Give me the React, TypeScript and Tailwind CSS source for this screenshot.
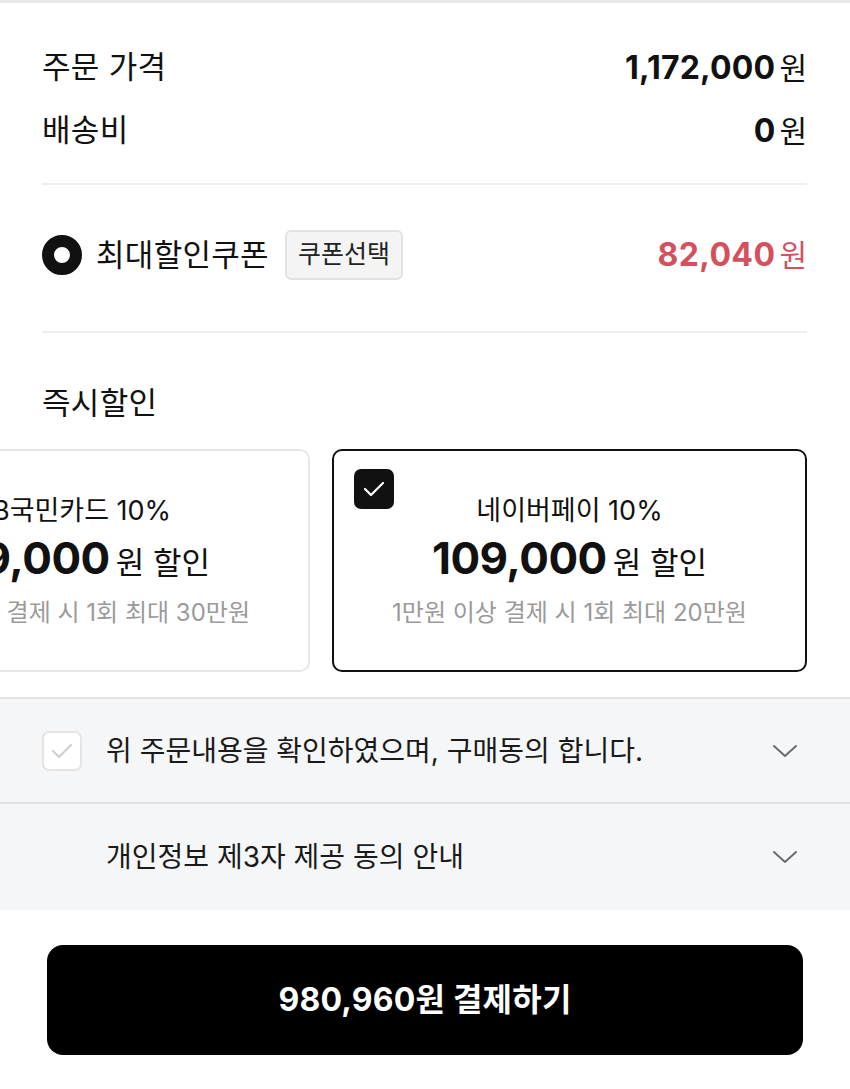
const Chevron = () => (
  <svg width="26" height="16" viewBox="0 0 26 16" fill="none">
    <polyline points="2,3 13,13 24,3" stroke="#6b6b6b" strokeWidth="2" strokeLinecap="round" strokeLinejoin="round" />
  </svg>
);

const Check = ({ color }: { color: string }) => (
  <svg width="24" height="18" viewBox="0 0 24 18" fill="none">
    <polyline points="3,9 9,15 21,3" stroke={color} strokeWidth="2.2" strokeLinecap="round" strokeLinejoin="round" />
  </svg>
);

type Card = { name: string; amount: string; note: string; selected: boolean };

const cards: Card[] = [
  { name: "KB국민카드 10%", amount: "109,000", note: "1만원 이상 결제 시 1회 최대 30만원", selected: false },
  { name: "네이버페이 10%", amount: "109,000", note: "1만원 이상 결제 시 1회 최대 20만원", selected: true },
];

const DiscountCard = ({ card }: { card: Card }) => (
  <div
    className={
      card.selected
        ? "relative w-[475px] h-[223px] shrink-0 rounded-[10px] border-2 border-[#111] bg-white flex flex-col items-center pt-[42px]"
        : "relative w-[475px] h-[223px] shrink-0 rounded-[10px] border-2 border-[#e6e6e6] bg-white flex flex-col items-center pt-[42px]"
    }
  >
    {card.selected && (
      <div className="absolute left-[20px] top-[18px] w-[40px] h-[40px] rounded-[7px] bg-[#111] flex items-center justify-center">
        <Check color="#ffffff" />
      </div>
    )}
    <p className="text-[27px] leading-[36px] text-[#111]">{card.name}</p>
    <p className="mt-[5px] flex items-baseline leading-[48px] text-[#111]">
      <span className="text-[44px] font-bold tracking-[-0.5px]">{card.amount}</span>
      <span className="ml-[6px] text-[31px]">원 할인</span>
    </p>
    <p className="mt-[10px] text-[24px] leading-[32px] text-[#9a9a9a]">{card.note}</p>
  </div>
);

export default function App() {
  return (
    <div className="w-[850px] min-h-screen overflow-hidden bg-white border-t-[3px] border-[#e8e8e8] font-['Inter','Noto_Sans_CJK_KR',sans-serif] text-[#111]">
      <section className="pl-[42px] pr-[43px] pt-[33px]">
        <div className="h-[63px] flex items-center justify-between">
          <span className="text-[31px] tracking-[0.3px]">주문 가격</span>
          <span className="flex items-baseline">
            <span className="text-[32px] font-bold tracking-[0.2px]">1,172,000</span>
            <span className="ml-[4px] text-[30px]">원</span>
          </span>
        </div>
        <div className="h-[63px] flex items-center justify-between">
          <span className="text-[31px] tracking-[0.3px]">배송비</span>
          <span className="flex items-baseline">
            <span className="text-[32px] font-bold">0</span>
            <span className="ml-[4px] text-[30px]">원</span>
          </span>
        </div>
        <div className="mt-[21px] h-[2px] bg-[#eeeeee]" />

        <div className="h-[146px] pb-[6px] flex items-center justify-between">
          <div className="flex items-center">
            <span className="w-[40px] h-[40px] rounded-full border-[12px] border-[#111] bg-white" />
            <span className="ml-[14px] text-[31px] tracking-[0.3px]">최대할인쿠폰</span>
            <button className="ml-[16px] h-[50px] px-[11px] rounded-[6px] border-2 border-[#e2e2e2] bg-[#f4f4f4] text-[25px] text-[#222]">
              쿠폰선택
            </button>
          </div>
          <span className="flex items-baseline text-[#d4505d]">
            <span className="text-[32px] font-bold tracking-[0.4px]">82,040</span>
            <span className="ml-[4px] text-[30px]">원</span>
          </span>
        </div>
        <div className="h-[2px] bg-[#eeeeee]" />

        <h2 className="mt-[50px] text-[31px] leading-[40px] font-normal tracking-[0.3px]">즉시할인</h2>
      </section>

      <div className="mt-[26px] flex gap-[22px] ml-[-165px]">
        {cards.map((c) => (
          <DiscountCard key={c.name} card={c} />
        ))}
      </div>

      <section className="mt-[25px] bg-[#f5f6f8] border-t-2 border-[#e4e4e6]">
        <div className="h-[105px] pl-[42px] pr-[52px] flex items-center justify-between border-b-2 border-[#e2e2e4]">
          <div className="flex items-center">
            <span className="w-[40px] h-[40px] rounded-[7px] border-2 border-[#e4e4e4] bg-white flex items-center justify-center">
              <Check color="#cfcfcf" />
            </span>
            <span className="ml-[24px] text-[28px] text-[#1a1a1a]">위 주문내용을 확인하였으며, 구매동의 합니다.</span>
          </div>
          <Chevron />
        </div>
        <div className="h-[106px] pl-[106px] pr-[52px] flex items-center justify-between">
          <span className="text-[28px] text-[#1a1a1a]">개인정보 제3자 제공 동의 안내</span>
          <Chevron />
        </div>
      </section>

      <div className="px-[47px] pt-[35px] pb-[34px]">
        <button className="w-full h-[110px] rounded-[16px] bg-black text-white text-[32px] font-bold tracking-[0.2px]">
          980,960원 결제하기
        </button>
      </div>
    </div>
  );
}
